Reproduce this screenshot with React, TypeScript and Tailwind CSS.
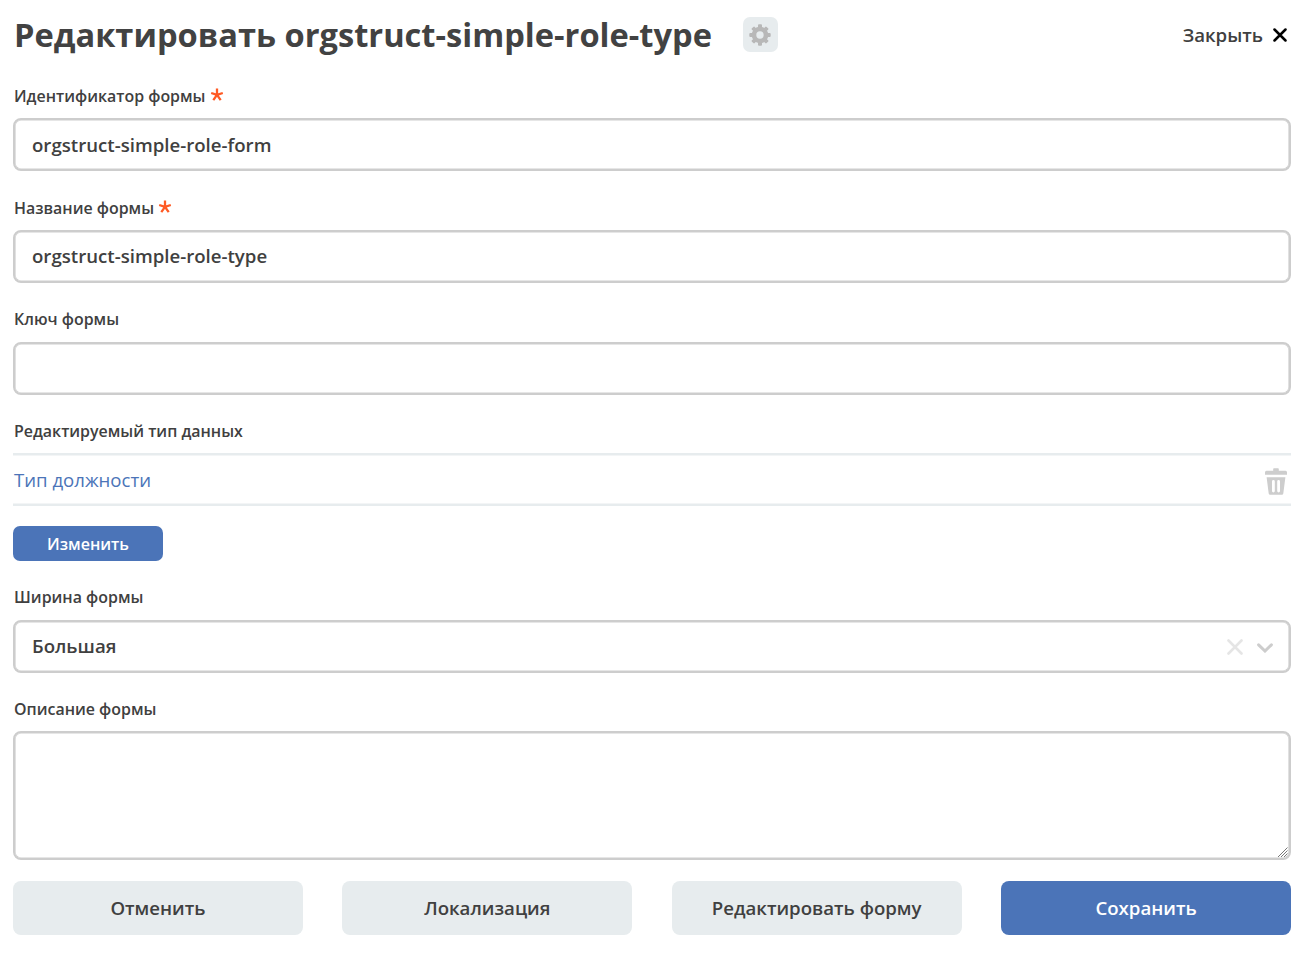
import React from "react";

function Label({ text, required, className }: { text: string; required?: boolean; className: string }) {
  return (
    <div className={`flex items-center whitespace-nowrap pl-[1px] text-[15.95px] font-semibold leading-[24px] text-[#404040] ${className}`}>
      <span>{text}</span>
      {required && (
        <svg className="-mt-[3px] ml-[5px] h-[13px] w-[12px] overflow-visible" viewBox="0 0 12 13" fill="none" stroke="#ff5a24" strokeWidth="2.3">
          <path d="M6 6.8V0.5M6 6.8L0.2 5M6 6.8L11.8 5M6 6.8L2.3 12.2M6 6.8L9.7 12.2" />
        </svg>
      )}
    </div>
  );
}

function Field({ value, className = "pb-[1px]", children }: { value: string; className?: string; children?: React.ReactNode }) {
  return (
    <div
      className={`flex h-[53px] items-center rounded-[8px] border-2 border-[#cdcdcd] pl-[17px] text-[18.64px] font-semibold leading-[26px] text-[#404040] shadow-[inset_0_0_0_0.6px_#cdcdcd] ${className}`}
    >
      <span>{value}</span>
      {children}
    </div>
  );
}

function ActionButton({ text, primary }: { text: string; primary?: boolean }) {
  return (
    <button
      className={`h-[54px] flex-1 rounded-[8px] text-[18.64px] font-semibold leading-[26px] ${
        primary ? "bg-[#4b74b8] text-white" : "bg-[#e7ecee] text-[#404040]"
      }`}
    >
      {text}
    </button>
  );
}

export default function App() {
  return (
    <main className="flex h-[967px] w-[1304px] flex-col overflow-hidden bg-white px-[13px] font-['Open_Sans',sans-serif]">
      <header className="flex h-[70px] items-center pb-[1px] pl-[1px]">
        <h1 className="whitespace-nowrap text-[32.64px] font-bold leading-[46px] text-[#424242]">
          Редактировать orgstruct-simple-role-type
        </h1>
        <button className="ml-[31px] flex h-[35px] w-[35px] items-center justify-center rounded-[7px] bg-[#e7ecee]">
          <svg className="h-[22px] w-[22px]" viewBox="0 0 22 22">
            <g fill="#b8b8b8">
              <rect x="9" y="0.3" width="4" height="21.4" rx="1" />
              <rect x="0.3" y="9" width="21.4" height="4" rx="1" />
              <rect x="9" y="0.6" width="4" height="20.8" rx="1" transform="rotate(45 11 11)" />
              <rect x="9" y="0.6" width="4" height="20.8" rx="1" transform="rotate(-45 11 11)" />
              <circle cx="11" cy="11" r="8.3" />
            </g>
            <circle cx="11" cy="11" r="3.7" fill="#e7ecee" />
          </svg>
        </button>
        <button className="ml-auto flex items-center pr-[4px] text-[18.64px] font-semibold leading-[26px] text-[#404040]">
          Закрыть
          <svg className="ml-[10px] mt-[1px] h-[14px] w-[14px]" viewBox="0 0 14 14" stroke="#000" strokeWidth="2.5" strokeLinecap="round">
            <path d="M1.5 1.5L12.5 12.5M12.5 1.5L1.5 12.5" />
          </svg>
        </button>
      </header>

      <Label text="Идентификатор формы" required className="mt-[14px] mb-[10px]" />
      <Field value="orgstruct-simple-role-form" className="pb-0" />
      <Label text="Название формы" required className="mt-[25px] mb-[10px]" />
      <Field value="orgstruct-simple-role-type" />
      <Label text="Ключ формы" className="mt-[24px] mb-[11px]" />
      <Field value="" />
      <Label text="Редактируемый тип данных" className="mt-[24px] mb-[10px]" />
      <div className="flex h-[53px] items-center border-y-[2px] border-[#e7ecee] shadow-[inset_0_0.5px_0_#e7ecee,inset_0_-0.5px_0_#e7ecee]">
        <span className="pl-[1px] text-[18.6px] leading-[26px] text-[#4b74b8]">Тип должности</span>
        <svg className="ml-auto mr-[4px] mt-[3px] h-[27px] w-[22px]" viewBox="0 0 22 27" fill="#cdcdcd" fillRule="evenodd">
          <path d="M9 0.3h4a.8.8 0 0 1 .8.8v1.6h6.7A1.5 1.5 0 0 1 22 4.2v2.5H0V4.2a1.5 1.5 0 0 1 1.5-1.5h6.7V1.1A.8.8 0 0 1 9 .3zM1.6 9.3h18.8L18.3 25.5a1.5 1.5 0 0 1-1.5 1.2H5.2a1.5 1.5 0 0 1-1.5-1.2zM8.4 12A1.4 1.4 0 0 0 7 13.4v9.6a1.4 1.4 0 0 0 2.8 0v-9.6A1.4 1.4 0 0 0 8.4 12zM13.6 12a1.4 1.4 0 0 0-1.4 1.4v9.6a1.4 1.4 0 0 0 2.8 0v-9.6A1.4 1.4 0 0 0 13.6 12z" />
        </svg>
      </div>
      <button className="mt-[20px] h-[35px] w-[150px] rounded-[7px] bg-[#4b74b8] text-[16px] font-semibold leading-[24px] text-white">
        Изменить
      </button>
      <Label text="Ширина формы" className="mt-[24px] mb-[11px]" />
      <Field value="Большая">
        <svg className="ml-auto mt-[2px] h-[16px] w-[16px]" viewBox="0 0 16 16" stroke="#e5e5e5" strokeWidth="2.6" strokeLinecap="round">
          <path d="M1.5 1.5L14.5 14.5M14.5 1.5L1.5 14.5" />
        </svg>
        <svg className="ml-[14px] mr-[16px] mt-[3px] h-[10px] w-[16px]" viewBox="0 0 16 10" fill="none" stroke="#cdcdcd" strokeWidth="3" strokeLinecap="round">
          <path d="M1.6 1.8L8 8L14.4 1.8" />
        </svg>
      </Field>
      <Label text="Описание формы" className="mt-[24px] mb-[10px]" />
      <div className="flex h-[129px] items-end justify-end rounded-[8px] border-2 border-[#cdcdcd] shadow-[inset_0_0_0_0.6px_#cdcdcd]">
        <svg className="h-[12px] w-[12px]" viewBox="0 0 12 12" stroke="#777" strokeWidth="1">
          <path d="M1 11L10.5 1.5M4 11L10.5 4.5M7 11L10.5 7.5" />
        </svg>
      </div>
      <div className="mt-[21px] flex gap-[39.5px]">
        <ActionButton text="Отменить" />
        <ActionButton text="Локализация" />
        <ActionButton text="Редактировать форму" />
        <ActionButton text="Сохранить" primary />
      </div>
    </main>
  );
}
